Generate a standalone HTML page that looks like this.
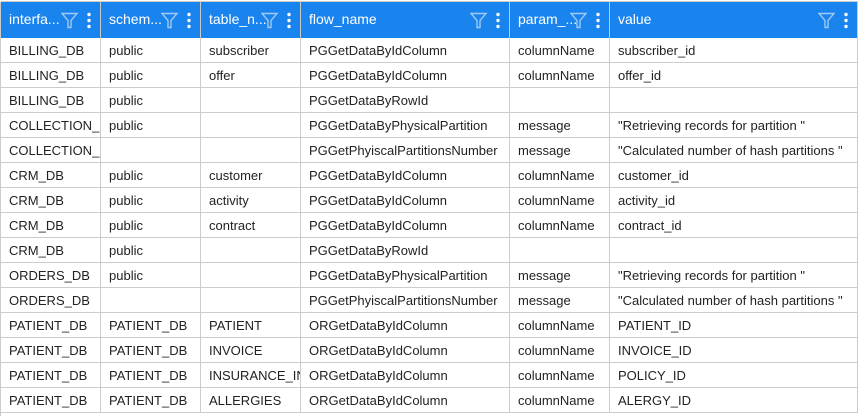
<!DOCTYPE html>
<html><head><style>
body{margin:0;width:862px;height:416px;overflow:hidden;background:#fff;font-family:"Liberation Sans",Arial,sans-serif;}
.t{position:absolute;left:1px;top:1px;width:857px;border-top:2px solid #ccc;}
.h{position:absolute;top:2px;height:36px;background:#1a84ee;color:#fff;font-size:14px;line-height:35px;box-sizing:border-box;padding-left:8px;border-right:1px solid #c9c9c9;}
.h svg{position:absolute;top:10px}
.c{position:absolute;height:25px;line-height:26px;font-size:13px;color:#222;box-sizing:border-box;padding-left:8px;border-right:1px solid #ccc;border-bottom:1px solid #ccc;white-space:nowrap;overflow:hidden;}
</style></head><body>
<div id="g"></div>
<script>
var cols=[[1,100,"interfa..."],[101,100,"schem..."],[201,100,"table_n..."],[301,209,"flow_name"],[510,100,"param_..."],[610,248,"value"]];
var rows=[["BILLING_DB","public","subscriber","PGGetDataByIdColumn","columnName","subscriber_id"],
["BILLING_DB","public","offer","PGGetDataByIdColumn","columnName","offer_id"],
["BILLING_DB","public","","PGGetDataByRowId","",""],
["COLLECTION_DB","public","","PGGetDataByPhysicalPartition","message","\"Retrieving records for partition \""],
["COLLECTION_DB","","","PGGetPhyiscalPartitionsNumber","message","\"Calculated number of hash partitions \""],
["CRM_DB","public","customer","PGGetDataByIdColumn","columnName","customer_id"],
["CRM_DB","public","activity","PGGetDataByIdColumn","columnName","activity_id"],
["CRM_DB","public","contract","PGGetDataByIdColumn","columnName","contract_id"],
["CRM_DB","public","","PGGetDataByRowId","",""],
["ORDERS_DB","public","","PGGetDataByPhysicalPartition","message","\"Retrieving records for partition \""],
["ORDERS_DB","","","PGGetPhyiscalPartitionsNumber","message","\"Calculated number of hash partitions \""],
["PATIENT_DB","PATIENT_DB","PATIENT","ORGetDataByIdColumn","columnName","PATIENT_ID"],
["PATIENT_DB","PATIENT_DB","INVOICE","ORGetDataByIdColumn","columnName","INVOICE_ID"],
["PATIENT_DB","PATIENT_DB","INSURANCE_INFO","ORGetDataByIdColumn","columnName","POLICY_ID"],
["PATIENT_DB","PATIENT_DB","ALLERGIES","ORGetDataByIdColumn","columnName","ALERGY_ID"]];
var h='<div class="t"></div><div style="position:absolute;left:0;top:2px;width:1px;height:414px;background:#ccc"></div>';
var icon=function(x){return '<svg style="left:'+x+'px" width="34" height="17" viewBox="0 0 34 17"><path d="M1 1.5h15l-6 7v7h-3v-7z" fill="none" stroke="#9fc8f3" stroke-width="1.4"/><circle cx="28" cy="2.5" r="1.7" fill="#fff"/><circle cx="28" cy="8.5" r="1.7" fill="#fff"/><circle cx="28" cy="14.5" r="1.7" fill="#fff"/></svg>';};
cols.forEach(function(c){h+='<div class="h" style="left:'+c[0]+'px;width:'+c[1]+'px">'+c[2]+icon(c[1]-40)+'</div>';});
rows.forEach(function(r,i){var y=38+i*25;cols.forEach(function(c,j){h+='<div class="c" style="left:'+c[0]+'px;top:'+y+'px;width:'+c[1]+'px">'+r[j]+'</div>';});});
document.getElementById('g').innerHTML=h;
</script>
</body></html>
